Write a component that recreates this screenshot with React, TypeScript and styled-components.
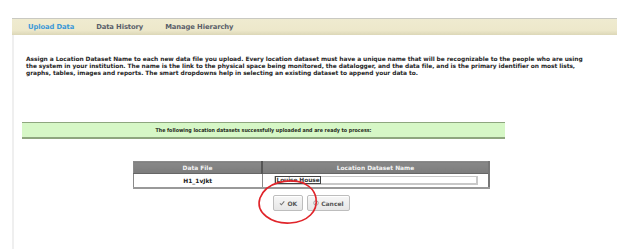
import React from 'react';
import styled, { createGlobalStyle } from 'styled-components';

const GlobalStyle = createGlobalStyle`
    html, body {
        margin: 0;
        padding: 0;
        background: #ffffff;
    }
    body {
        font-family: "DejaVu Sans", "Liberation Sans", sans-serif;
        color: #222;
    }
`;

const Page = styled.div`
    position: relative;
    width: 617px;
    height: 249px;
    padding-top: 18px;
    box-sizing: border-box;
    overflow: hidden;
`;

const TabBar = styled.div`
    margin-left: 12px;
    height: 17px;
    box-sizing: border-box;
    border-top: 1px solid #c9c9c2;
    background: linear-gradient(#efebd0 0%, #ede8cb 70%, #dcd7b7 100%);
    display: flex;
    align-items: center;
    padding-left: 16px;
    gap: 22px;
`;

const Tab = styled.span<{ $active?: boolean }>`
    font-family: "DejaVu Sans", sans-serif;
    font-size: 6.8px;
    font-weight: bold;
    color: ${(props) => (props.$active ? '#3a98d8' : '#5a5f6a')};
    letter-spacing: -0.1px;
`;

const Content = styled.div`
    margin-left: 12px;
    border-left: 2px solid #efefef;
    height: 214px;
    padding-top: 21px;
    box-sizing: border-box;
`;

const Intro = styled.p`
    margin: 0 0 0 12px;
    width: 562px;
    font-family: "DejaVu Sans", sans-serif;
    font-size: 5.9px;
    line-height: 6.8px;
    font-weight: bold;
    color: #262626;
    letter-spacing: -0.05px;
`;

const Notice = styled.div`
    margin: 46px 0 0 8px;
    width: 483px;
    height: 17px;
    box-sizing: border-box;
    border-top: 1px solid #8ea67e;
    border-bottom: 2px solid #8ea67e;
    background: #d6f7c6;
    display: flex;
    align-items: center;
    justify-content: center;
    font-family: "DejaVu Sans Condensed", "DejaVu Sans", sans-serif;
    font-size: 5.3px;
    font-weight: bold;
    color: #1f2a1a;
`;

const TableBlock = styled.div`
    margin: 22px 0 0 119px;
    width: 357px;
    display: flex;
    flex-direction: column;
    align-items: center;
`;

const Grid = styled.table`
    width: 100%;
    border-collapse: collapse;
    border: 1px solid #8a8a8a;
    border-right: 2px solid #777;
    border-bottom: 2px solid #999;
    table-layout: fixed;
`;

const HeadCell = styled.th<{ $w?: number }>`
    width: ${(props) => (props.$w ? `${props.$w}px` : 'auto')};
    height: 11px;
    padding: 0;
    background: linear-gradient(#888 0%, #7c7c7c 100%);
    color: #f4f4f4;
    font-family: "DejaVu Sans", sans-serif;
    font-size: 5.9px;
    font-weight: bold;
    text-align: center;
    border-right: 2px solid #555;
    &:last-child {
        border-right: none;
    }
`;

const BodyCell = styled.td<{ $left?: boolean }>`
    height: 13px;
    padding: 0;
    background: #fff;
    font-family: "DejaVu Sans", sans-serif;
    font-size: 5.9px;
    font-weight: bold;
    color: #222;
    text-align: ${(props) => (props.$left ? 'left' : 'center')};
    border-right: 1px solid #8a8a8a;
    border-top: 1px solid #666;
    &:last-child {
        border-right: none;
    }
`;

const FieldBox = styled.div`
    margin-left: 11px;
    width: 204px;
    height: 9px;
    box-sizing: border-box;
    border: 1px solid #c8c8c8;
    border-right-width: 2px;
    border-bottom-width: 2px;
    display: flex;
    align-items: center;
`;

const FieldText = styled.span`
    font-family: "DejaVu Sans", sans-serif;
    font-size: 5.9px;
    font-weight: bold;
    line-height: 6px;
    color: #333;
    border: 1px solid #444;
    border-right-width: 1.5px;
    padding: 0 0 0 1px;
    letter-spacing: -0.1px;
`;

const Actions = styled.div`
    margin-top: 6px;
    display: flex;
    gap: 4px;
`;

const Button = styled.button`
    height: 16px;
    padding: 0 5px;
    display: flex;
    align-items: center;
    gap: 2px;
    border: 1px solid #bdbdbd;
    border-radius: 2px;
    background: linear-gradient(#f7f7f7 0%, #e6e6e6 100%);
    box-shadow: inset 0 1px 0 #fff;
    font-family: "DejaVu Sans", sans-serif;
    font-size: 6px;
    font-weight: bold;
    color: #555;
    cursor: pointer;
`;

const Mark = styled.svg`
    display: block;
`;

const Annotation = styled.svg`
    position: absolute;
    left: 0;
    top: 0;
    pointer-events: none;
`;

export default function App() {
    return (
        <>
            <GlobalStyle />
            <Page>
                <TabBar>
                    <Tab $active>Upload Data</Tab>
                    <Tab>Data History</Tab>
                    <Tab>Manage Hierarchy</Tab>
                </TabBar>
                <Content>
                    <Intro>
                        Assign a Location Dataset Name to each new data file you upload. Every location dataset must have a unique name that will be recognizable to the people who are using the system in your institution. The name is the link to the physical space being monitored, the datalogger, and the data file, and is the primary identifier on most lists, graphs, tables, images and reports. The smart dropdowns help in selecting an existing dataset to append your data to.
                    </Intro>
                    <Notice>The following location datasets successfully uploaded and are ready to process:</Notice>
                    <TableBlock>
                        <Grid>
                            <thead>
                                <tr>
                                    <HeadCell $w={127}>Data File</HeadCell>
                                    <HeadCell>Location Dataset Name</HeadCell>
                                </tr>
                            </thead>
                            <tbody>
                                <tr>
                                    <BodyCell>H1_1vJkt</BodyCell>
                                    <BodyCell $left>
                                        <FieldBox>
                                            <FieldText>Louise House</FieldText>
                                        </FieldBox>
                                    </BodyCell>
                                </tr>
                            </tbody>
                        </Grid>
                        <Actions>
                            <Button>
                                <Mark width="6" height="6" viewBox="0 0 10 10">
                                    <path d="M1.5 5.5 L4 8 L8.8 2.2" fill="none" stroke="#777" strokeWidth="1.8" />
                                </Mark>
                                OK
                            </Button>
                            <Button>
                                <Mark width="6" height="6" viewBox="0 0 10 10">
                                    <circle cx="5" cy="5" r="3.8" fill="none" stroke="#999" strokeWidth="1.4" />
                                    <path d="M2.4 7.6 L7.6 2.4" stroke="#999" strokeWidth="1.4" />
                                </Mark>
                                Cancel
                            </Button>
                        </Actions>
                    </TableBlock>
                </Content>
                <Annotation width="617" height="249" viewBox="0 0 617 249">
                    <path
                        d="M304 183 C 288 178, 266 182, 260 198 C 255 213, 272 224, 290 223 C 308 222, 318 211, 316 198 C 314 188, 306 183, 296 181"
                        fill="none"
                        stroke="#e0242a"
                        strokeWidth="1.6"
                        strokeLinecap="round"
                    />
                </Annotation>
            </Page>
        </>
    );
}
